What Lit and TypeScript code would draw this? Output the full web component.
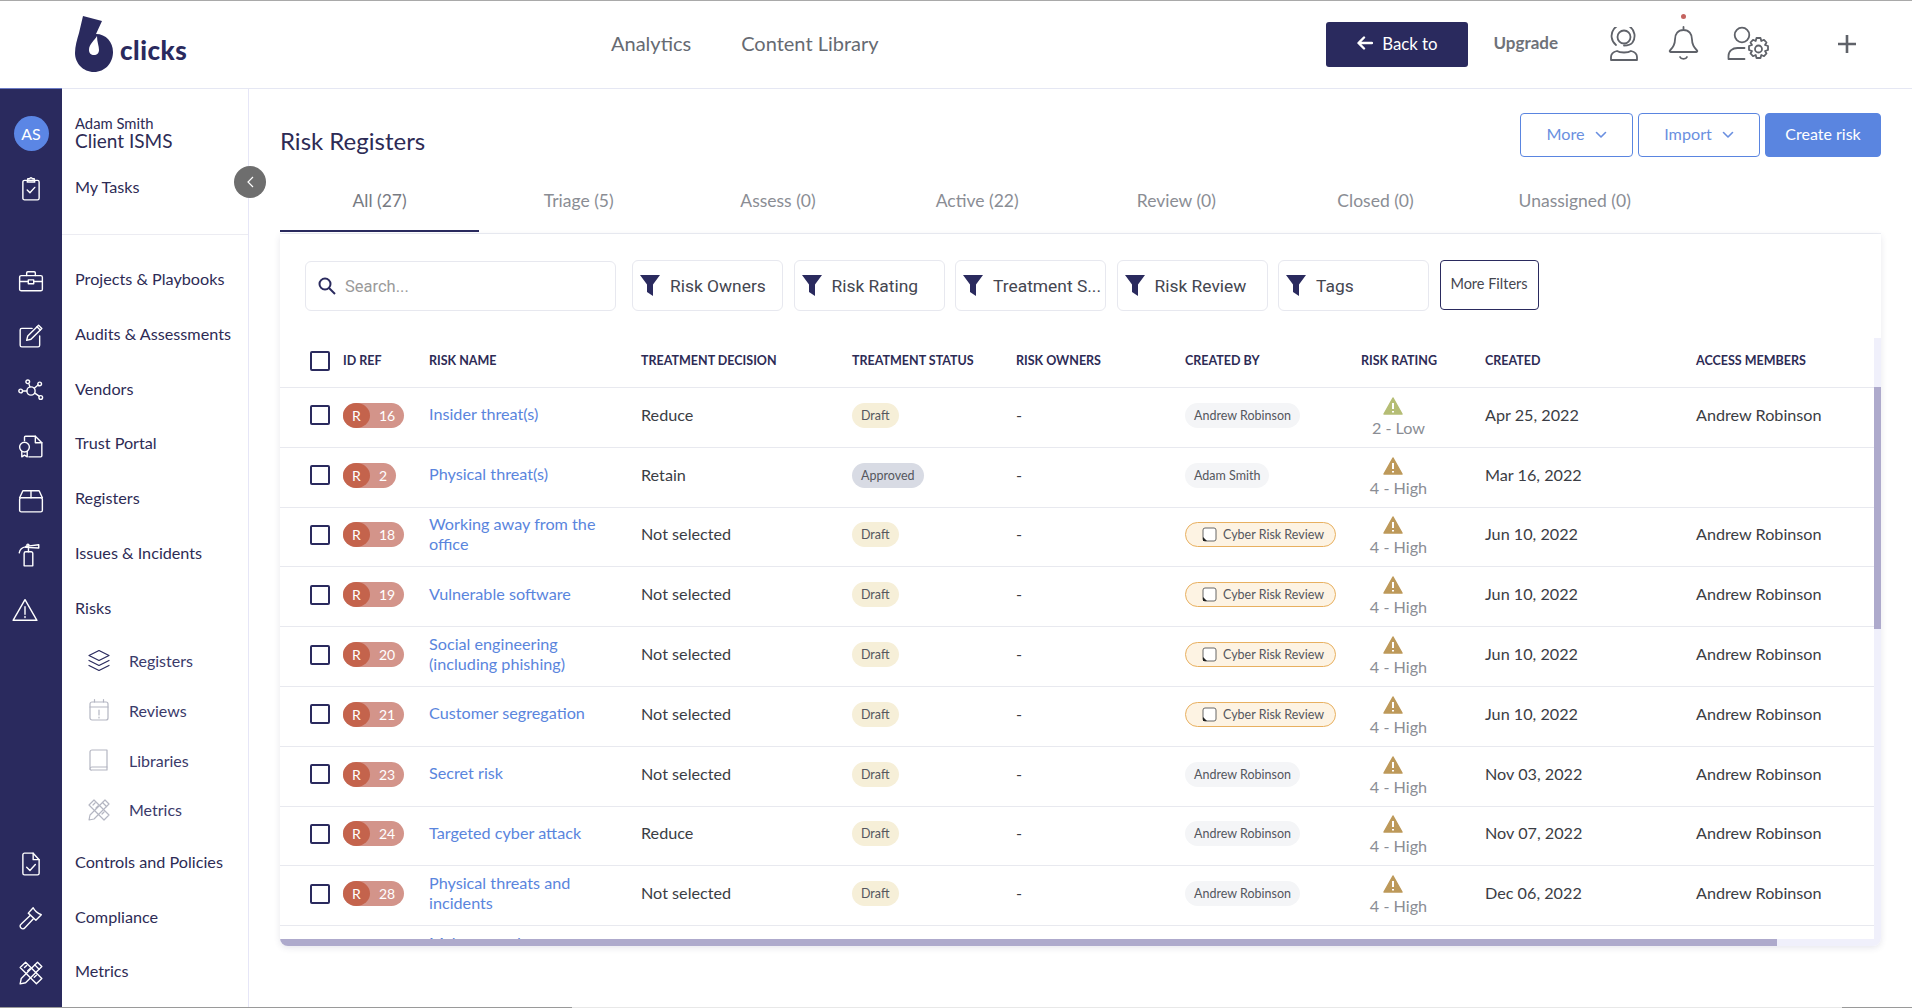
import { LitElement, css, html, svg } from 'lit';
import { customElement } from 'lit/decorators.js';

const icons: Record<string, unknown> = {
  clipboard: svg`<rect x="4.500" y="4" width="15" height="18" rx="1.500"/><path d="M9 4V2.500h2a1 1 0 0 1 2 0h2V4l.5 1.500h-7z"/><path d="M8.500 13l2.500 2.500 4.500-5"/>`,
  briefcase: svg`<rect x="1.500" y="7" width="21" height="14" rx="1.500"/><path d="M8 7V4.500A1 1 0 0 1 9 3.500h6a1 1 0 0 1 1 1V7"/><path d="M1.500 12.500h8M14.500 12.500h8"/><rect x="9.500" y="11" width="5" height="3.500"/>`,
  edit: svg`<path d="M13 5H3.500A1.500 1.500 0 0 0 2 6.500v14A1.500 1.500 0 0 0 3.500 22h15a1.500 1.500 0 0 0 1.500-1.500V12"/><path d="M9 12L19 2l3 3-10 10-4 1z"/><path d="M17.500 3.500l3 3"/>`,
  nodes: svg`<circle cx="12" cy="12" r="3.800"/><circle cx="9" cy="3.500" r="1.700"/><circle cx="20" cy="5.500" r="1.700"/><circle cx="21" cy="18" r="1.700"/><circle cx="2.500" cy="12" r="1.700"/><path d="M10 5.200l1 3M18.500 6.500l-3.500 3M15.500 14l4 2.800M4.200 12h4"/>`,
  cert: svg`<path d="M6 7V4a1 1 0 0 1 1-1h9l6 6v12a1 1 0 0 1-1 1H10"/><path d="M16 3v6h6"/><circle cx="6" cy="13" r="4.500"/><path d="M3.500 17v5l2.500-1.500L8.500 22v-5"/>`,
  box: svg`<rect x="1.500" y="9" width="21" height="13" rx="1.500"/><path d="M1.500 9l3-6.500h15l3 6.500M12 2.500V9"/>`,
  extinguisher: svg`<path d="M9 9h5a1.500 1.500 0 0 1 1.500 1.500V22h-8V10.500A1.500 1.500 0 0 1 9 9z"/><path d="M11.500 9V4.500M9 4l12-1.500v3L9 5zM9 4.500C5 5 3.500 7 3 10"/><circle cx="11" cy="3" r="1"/>`,
  warning: svg`<path d="M12 2.500L23 21.500H1z"/><path d="M12 9v7M12 18v1"/>`,
  doccheck: svg`<path d="M14 2H6a1.500 1.500 0 0 0-1.500 1.500v17A1.500 1.500 0 0 0 6 22h12a1.500 1.500 0 0 0 1.500-1.500V8z"/><path d="M14 2v6h5.500"/><path d="M8 15l3 3 5-5.500"/>`,
  gavel: svg`<path d="M9.500 7.500L14 2.500c1 2 3 4.500 7.500 6.500L16.500 14z"/><path d="M11 10L3 17.500c-1.500 1.200-1.300 2.800-.2 3.800s2.600 1 3.600-.3L14 13"/>`,
  metrics: svg`<path d="M7 2L2 7l15 15 5-5zM6 7l2-2M9 10l2-2M15 16l2-2"/><path d="M18 2l4 4L7 21l-5 1 1-5z"/><path d="M15.500 4.500l4 4"/>`,
  layers: svg`<path d="M12 2l10 5-10 5L2 7z"/><path d="M2 12l10 5 10-5M2 17l10 5 10-5"/>`,
  calendar: svg`<rect x="3" y="4" width="18" height="18" rx="2"/><path d="M3 9h18M7.500 1.500V4M16.500 1.500V4M12 12v5M12 19v1"/>`,
  book: svg`<path d="M5 2h15v17H5a2 2 0 0 0-2 2V4a2 2 0 0 1 2-2z"/><path d="M3 21a1.500 1.500 0 0 0 2 1h15v-3"/>`,
};

const icon = (name: string, size = 26, width = 1.300) => html`<svg
  class="icon"
  width=${size}
  height=${size}
  viewBox="0 0 24 24"
  fill="none"
  stroke="currentColor"
  stroke-width=${width}
  stroke-linecap="round"
  stroke-linejoin="round"
>${icons[name]}</svg>`;

const funnel = html`<svg class="funnel" width="20" height="21" viewBox="0 0 20 21"><path d="M0 0h20l-7 9.500V21l-6-4V9.500z" fill="#2a2a5e"/></svg>`;

const chevron = html`<svg class="chev" width="12" height="8" viewBox="0 0 12 8" fill="none" stroke="currentColor" stroke-width="1.600" stroke-linecap="round" stroke-linejoin="round"><path d="M1.500 1.500L6 6l4.500-4.500"/></svg>`;

const warnIcon = (color: string) => html`<svg width="20" height="18" viewBox="0 0 20 18">
  <path d="M10 1L19 17H1z" fill=${color} stroke=${color} stroke-width="1.500" stroke-linejoin="round"/>
  <path d="M10 6v6M10 14v1.500" stroke="#fff" stroke-width="2"/>
</svg>`;

const railItems = [
  { name: 'briefcase', cls: 'g0' },
  { name: 'edit', cls: '' },
  { name: 'nodes', cls: '' },
  { name: 'cert', cls: '' },
  { name: 'box', cls: '' },
  { name: 'extinguisher', cls: 'ext' },
  { name: 'warning', cls: 'warn' },
];

const navTop = ['Projects & Playbooks', 'Audits & Assessments', 'Vendors', 'Trust Portal', 'Registers', 'Issues & Incidents', 'Risks'];
const navSub = [
  { label: 'Registers', icon: 'layers', cls: 'dark' },
  { label: 'Reviews', icon: 'calendar', cls: '' },
  { label: 'Libraries', icon: 'book', cls: '' },
  { label: 'Metrics', icon: 'metrics', cls: '' },
];
const navBottom = ['Controls and Policies', 'Compliance', 'Metrics'];

const tabs = ['All (27)', 'Triage (5)', 'Assess (0)', 'Active (22)', 'Review (0)', 'Closed (0)', 'Unassigned (0)'];
const filters = ['Risk Owners', 'Risk Rating', 'Treatment S...', 'Risk Review', 'Tags'];
const heads = ['ID REF', 'RISK NAME', 'TREATMENT DECISION', 'TREATMENT STATUS', 'RISK OWNERS', 'CREATED BY', 'RISK RATING', 'CREATED', 'ACCESS MEMBERS'];

const AR = 'Andrew Robinson';
const CY = 'Cyber Risk Review';
const rows = [
  { id: 16, name: 'Insider threat(s)', dec: 'Reduce', status: 'Draft', by: AR, rating: '2 - Low', date: 'Apr 25, 2022', access: AR },
  { id: 2, name: 'Physical threat(s)', dec: 'Retain', status: 'Approved', by: 'Adam Smith', rating: '4 - High', date: 'Mar 16, 2022', access: '' },
  { id: 18, name: 'Working away from the office', dec: 'Not selected', status: 'Draft', by: CY, rating: '4 - High', date: 'Jun 10, 2022', access: AR },
  { id: 19, name: 'Vulnerable software', dec: 'Not selected', status: 'Draft', by: CY, rating: '4 - High', date: 'Jun 10, 2022', access: AR },
  { id: 20, name: 'Social engineering (including phishing)', dec: 'Not selected', status: 'Draft', by: CY, rating: '4 - High', date: 'Jun 10, 2022', access: AR },
  { id: 21, name: 'Customer segregation', dec: 'Not selected', status: 'Draft', by: CY, rating: '4 - High', date: 'Jun 10, 2022', access: AR },
  { id: 23, name: 'Secret risk', dec: 'Not selected', status: 'Draft', by: AR, rating: '4 - High', date: 'Nov 03, 2022', access: AR },
  { id: 24, name: 'Targeted cyber attack', dec: 'Reduce', status: 'Draft', by: AR, rating: '4 - High', date: 'Nov 07, 2022', access: AR },
  { id: 28, name: 'Physical threats and incidents', dec: 'Not selected', status: 'Draft', by: AR, rating: '4 - High', date: 'Dec 06, 2022', access: AR },
];

@customElement('app-root')
export class AppRoot extends LitElement {
  static styles = css`
    :host {
      display: flex;
      flex-direction: column;
      width: 1912px;
      height: 1008px;
      overflow: hidden;
      background: #fff;
      font-family: Lato, 'Liberation Sans', sans-serif;
      font-size: 16.200px;
      color: #2a2a5e;
    }

    .topline {
      flex: none;
      height: 1px;
      background: #a9a9a9;
    }

    /* header */
    header {
      flex: none;
      box-sizing: border-box;
      height: 88px;
      display: flex;
      align-items: center;
      padding: 0 0 1px 75px;
      border-bottom: 1px solid #e5e7f3;
    }

    .logo {
      display: flex;
      align-items: flex-end;
      width: 113px;
      height: 56px;
    }

    .logo-text {
      margin: 0 0 6px 7px;
      font-size: 26px;
      line-height: 32px;
      font-weight: 900;
      letter-spacing: 0.500px;
      color: #2a2a5e;
    }

    .top-nav {
      display: flex;
      gap: 50px;
      margin-left: 423px;
      padding-bottom: 3px;
      font-size: 20px;
      color: #666a72;
    }

    .top-right {
      display: flex;
      align-items: center;
      margin-left: auto;
      height: 100%;
    }

    .back {
      box-sizing: border-box;
      display: flex;
      align-items: center;
      justify-content: center;
      gap: 9px;
      width: 142px;
      height: 45px;
      padding-bottom: 2px;
      border-radius: 3px;
      background: #2a2a5e;
      color: #fff;
      font-size: 16.800px;
    }

    .upgrade {
      margin-left: 25px;
      padding-bottom: 3px;
      font-size: 17px;
      font-weight: 700;
      color: #6f7279;
    }

    .head-icon {
      position: relative;
      display: flex;
      color: #5f6269;
    }

    .headset {
      margin-left: 50px;
    }

    .bell {
      margin-left: 27px;
    }

    .dot {
      position: absolute;
      left: 14px;
      top: -12px;
      width: 5px;
      height: 5px;
      border-radius: 50%;
      background: #c4635f;
    }

    .usergear {
      margin-left: 27px;
    }

    .plus {
      margin-left: 68px;
      margin-right: 55px;
    }

    /* body */
    .body {
      flex: 1;
      min-height: 0;
      display: flex;
    }

    .rail {
      flex: none;
      width: 62px;
      display: flex;
      flex-direction: column;
      align-items: center;
      margin-top: -1px;
      border-top: 1px solid #6a7ac4;
      background: #2a2a5e;
      color: #fff;
    }

    .avatar {
      display: flex;
      align-items: center;
      justify-content: center;
      width: 35px;
      height: 35px;
      margin-top: 27px;
      padding-bottom: 1px;
      box-sizing: border-box;
      border-radius: 50%;
      background: #5b86e5;
      color: #fff;
      font-size: 16px;
    }

    .rail-btn {
      box-sizing: border-box;
      display: flex;
      align-items: center;
      justify-content: center;
      width: 100%;
      height: 54.800px;
    }

    .rail-btn.first {
      margin-top: 18px;
      height: 40px;
    }

    .rail-btn.g0 {
      margin-top: 45px;
    }

    .rail-btn.ext {
      padding-right: 4px;
    }

    .rail-btn.warn {
      padding-right: 12px;
    }

    .rail-bottom {
      margin-top: 199px;
      width: 100%;
    }

    .rail-bottom .rail-btn {
      height: 54.400px;
    }

    .side {
      flex: none;
      position: relative;
      box-sizing: border-box;
      width: 187px;
      border-right: 1px solid #e6e6f7;
      color: #2d2b55;
    }

    .who {
      box-sizing: border-box;
      height: 146px;
      padding: 26px 0 0 13px;
      border-bottom: 1px solid #ececf2;
    }

    .who-name {
      font-size: 14.800px;
      line-height: 17px;
    }

    .who-org {
      font-size: 19px;
      line-height: 17px;
    }

    .tasks {
      margin-top: 28px;
      line-height: 20px;
    }

    .collapse {
      position: absolute;
      right: -18px;
      top: 77px;
      display: flex;
      align-items: center;
      justify-content: center;
      width: 32px;
      height: 32px;
      border-radius: 50%;
      background: #6e6e6e;
    }

    .side-list {
      padding: 17px 0 0 13px;
    }

    .side-item {
      height: 54.800px;
      line-height: 54.800px;
    }

    .sub-item {
      display: flex;
      align-items: center;
      height: 49.800px;
      font-size: 16px;
      color: #3a3a6a;
    }

    .sub-icon {
      display: flex;
      justify-content: center;
      width: 24px;
      margin: 0 18px 0 12px;
      color: #b4b6c2;
    }

    .sub-item.dark .sub-icon {
      color: #2a2a5e;
    }

    /* main */
    .main {
      flex: 1;
      min-width: 0;
      display: flex;
      flex-direction: column;
      padding: 24px 31px 0;
    }

    .title-row {
      display: flex;
      gap: 5px;
      height: 44px;
    }

    h1 {
      margin: 13px auto 0 0;
      font-size: 24px;
      line-height: 30px;
      font-weight: 400;
      color: #2d2b55;
    }

    .btn {
      box-sizing: border-box;
      display: flex;
      align-items: center;
      justify-content: center;
      gap: 10px;
      height: 44px;
      padding-bottom: 3px;
      border: 1px solid #5a85e0;
      border-radius: 4px;
      color: #6a8fe0;
    }

    .chev {
      margin-top: 3px;
    }

    .btn.more {
      width: 113px;
    }

    .btn.import {
      width: 122px;
    }

    .btn.create {
      width: 116px;
      background: #5a85e0;
      color: #fff;
      font-size: 16px;
    }

    .tabs {
      display: flex;
      flex: none;
      height: 61px;
      margin-top: 15px;
      border-bottom: 1px solid #eceef4;
    }

    .tab {
      box-sizing: border-box;
      width: 199.200px;
      height: 60px;
      padding-top: 18px;
      text-align: center;
      font-size: 17.500px;
      line-height: 22px;
      color: #8a8d94;
    }

    .tab.active {
      color: #777a82;
      border-bottom: 2px solid #2a2a5e;
    }

    .card {
      flex: none;
      display: flex;
      flex-direction: column;
      box-sizing: border-box;
      height: 712px;
      border-radius: 0 0 8px 8px;
      overflow: hidden;
      background: #fff;
      box-shadow: 0 2px 6px rgba(60, 60, 100, 0.12);
    }

    .filters {
      flex: none;
      display: flex;
      gap: 10.500px;
      height: 51px;
      padding: 26px 0 25px 25px;
    }

    .search {
      box-sizing: border-box;
      display: flex;
      align-items: center;
      gap: 9px;
      width: 311px;
      height: 50px;
      margin: 1px 5.500px 0 0;
      padding-left: 12px;
      border: 1px solid #e7e8ef;
      border-radius: 6px;
      font-family: Roboto, sans-serif;
      font-size: 16.500px;
      color: #9a9a9a;
    }

    .search svg {
      color: #2a2a5e;
    }

    .filter {
      box-sizing: border-box;
      display: flex;
      align-items: center;
      gap: 10px;
      width: 151px;
      height: 51px;
      padding-left: 7px;
      border: 1px solid #e7e8ef;
      border-radius: 6px;
      font-family: Roboto, sans-serif;
      font-size: 17.400px;
      color: #444650;
      white-space: nowrap;
    }

    .funnel {
      flex: none;
    }

    .more-filters {
      box-sizing: border-box;
      display: flex;
      align-items: center;
      justify-content: center;
      width: 99px;
      height: 50px;
      padding-bottom: 3px;
      border: 1px solid #2a2a5e;
      border-radius: 4px;
      font-size: 14.500px;
      color: #444650;
    }

    .table-wrap {
      flex: 1;
      min-height: 0;
      display: flex;
    }

    .table {
      flex: 1;
      min-width: 0;
      overflow: hidden;
    }

    .row {
      display: grid;
      grid-template-columns: 33px 86px 212px 211px 164px 169px 176px 124px 211px 1fr;
      align-items: center;
      box-sizing: border-box;
      height: 59.800px;
      padding: 0 0 4px 30px;
      border-bottom: 1px solid #e8e9ef;
      color: #3b3d44;
    }

    .row.head {
      height: 52px;
      padding: 0 0 2px 30px;
      font-size: 12.500px;
      font-weight: 700;
      color: #2d2b55;
    }

    .row.partial {
      border-bottom: none;
    }

    .txt {
      padding-bottom: 2px;
    }

    .check {
      box-sizing: border-box;
      width: 20px;
      height: 20px;
      border: 2px solid #2a2a5e;
      border-radius: 2px;
    }

    .idpill {
      justify-self: start;
      display: inline-flex;
      align-items: center;
      height: 25px;
      border-radius: 13px;
      background: #d3948a;
      color: #fff;
      font-size: 14px;
    }

    .idpill b {
      display: flex;
      align-items: center;
      justify-content: center;
      width: 27px;
      height: 25px;
      border-radius: 50%;
      background: #c4634c;
      font-weight: 400;
    }

    .idpill span {
      padding: 0 9px;
    }

    .name {
      width: 190px;
      color: #5a85dd;
      line-height: 20px;
    }

    .name.narrow {
      width: 100px;
    }

    .pill {
      justify-self: start;
      display: inline-flex;
      align-items: center;
      height: 25px;
      padding: 0 9px;
      border-radius: 13px;
      font-size: 12.500px;
      color: #55575e;
    }

    .pill.draft {
      background: #f6efd8;
    }

    .pill.approved {
      background: #d8dbe4;
    }

    .pill.by {
      background: #f4f5f7;
    }

    .pill.cyber {
      box-sizing: border-box;
      width: 151px;
      padding-left: 16px;
      gap: 6px;
      background: #fdf3e3;
      border: 1px solid #e8b060;
    }

    .rating {
      display: flex;
      flex-direction: column;
      align-items: center;
      width: 75px;
      padding-top: 4px;
      color: #8a8d94;
      line-height: 20px;
    }

    .rating svg {
      margin: 0 12px 3px 0;
    }

    .vtrack {
      flex: none;
      width: 7px;
      margin-top: 2px;
      padding-top: 49px;
      background: #f0f0fb;
    }

    .vthumb {
      height: 242px;
      background: #aeaacc;
    }

    .htrack {
      flex: none;
      height: 7px;
      background: #f0f0fb;
    }

    .hthumb {
      height: 7px;
      background: #aeaacc;
    }

    .bottomline {
      flex: none;
      display: flex;
      height: 1px;
      background: #e8e8e8;
    }

    .bottomline i {
      background: #9a9a9a;
    }

    .bl-left {
      width: 572px;
    }

    .bl-right {
      width: 70px;
      margin-left: auto;
    }
  `;

  renderRow(r: (typeof rows)[number]) {
    return html`<div class="row">
      <div class="check"></div>
      <div class="idpill"><b>R</b><span>${r.id}</span></div>
      <div class="name txt">${r.name}</div>
      <div class="txt">${r.dec}</div>
      <div class="pill ${r.status === 'Draft' ? 'draft' : 'approved'}">${r.status}</div>
      <div class="txt">-</div>
      ${r.by === CY
        ? html`<div class="pill cyber">
            <svg width="15" height="15" viewBox="0 0 15 15"><rect x="1" y="1" width="13" height="13" rx="2" fill="#fff" stroke="#666" stroke-width="1"/><path d="M1 10l4 4H1z" fill="#222"/></svg>
            ${r.by}
          </div>`
        : html`<div class="pill by">${r.by}</div>`}
      <div class="rating">
        ${warnIcon(r.rating.startsWith('2') ? '#b5bd75' : '#bd995a')}
        ${r.rating}
      </div>
      <div class="txt">${r.date}</div>
      <div class="txt">${r.access}</div>
    </div>`;
  }

  render() {
    return html`
      <div class="topline"></div>
      <header>
        <div class="logo">
          <svg width="38" height="56" viewBox="0 0 38 56">
            <path d="M8 0L27 5L21 18C31 18 38 26 38 36C38 47 30 56 19 56C8 56 0 47 0 37C0 30 2 24 4 17Z" fill="#2a2a5e"/>
            <path d="M22 20C20 24 14 28 14 34C14 37 16 39 19 39C22 39 24 37 24 34C24 30 22 26 22 20Z" fill="#fff"/>
          </svg>
          <span class="logo-text">clicks</span>
        </div>
        <nav class="top-nav"><span>Analytics</span><span>Content Library</span></nav>
        <div class="top-right">
          <div class="back">
            <svg width="16" height="14" viewBox="0 0 16 14" fill="none" stroke="#fff" stroke-width="2.400" stroke-linecap="round" stroke-linejoin="round"><path d="M15 7H2M7 1.500L1.500 7 7 12.500"/></svg>
            Back to
          </div>
          <span class="upgrade">Upgrade</span>
          <div class="head-icon headset">
            <svg width="32" height="34" viewBox="0 0 32 34" fill="none" stroke="currentColor" stroke-width="1.800" stroke-linecap="round" stroke-linejoin="round"><circle cx="16" cy="10" r="6.500"/><path d="M8 18a11.500 11.500 0 1 1 16.500-2.500c-1.500 2-4.500 3-8.500 3"/><path d="M3 33v-3c0-3 2-5 6-6 3 2 11 2 14 0 4 1 6 3 6 6v3z"/></svg>
          </div>
          <div class="head-icon bell">
            <span class="dot"></span>
            <svg width="33" height="36" viewBox="0 0 33 36" fill="none" stroke="currentColor" stroke-width="1.800" stroke-linecap="round" stroke-linejoin="round"><path d="M16.500 1v3M16.500 4c-5.500 0-8.500 4-8.500 9.500 0 5-2 8-5 11-.7.7-.2 1.500.5 1.500h26c.7 0 1.200-.8.500-1.500-3-3-5-6-5-11 0-5.500-3-9.500-8.500-9.500zM13 31c1 2.500 6 2.500 7 0"/></svg>
          </div>
          <div class="head-icon usergear">
            <svg width="42" height="36" viewBox="0 0 42 36" fill="none" stroke="currentColor" stroke-width="1.800" stroke-linecap="round" stroke-linejoin="round"><circle cx="15" cy="9" r="7.300"/><path d="M1.500 33v-3c0-5 4-8 9-8h7M1.500 33h16"/><g transform="translate(.5 -2)"><circle cx="31" cy="25" r="3.500"/><path d="M29 14h4l.8 3 2.700-1.200 2.500 2.700-1.500 2.500 3 1v4l-3 1 1.500 2.500-2.500 2.700-2.700-1.200-.8 3h-4l-.8-3-2.700 1.200-2.500-2.700 1.500-2.500-3-1v-4l3-1-1.500-2.500 2.500-2.700 2.700 1.200z"/></g></svg>
          </div>
          <div class="head-icon plus">
            <svg width="20" height="20" viewBox="0 0 20 20" stroke="currentColor" stroke-width="2.600"><path d="M10 1v18M1 10h18"/></svg>
          </div>
        </div>
      </header>
      <div class="body">
        <div class="rail">
          <div class="avatar">AS</div>
          <div class="rail-btn first">${icon('clipboard')}</div>
          ${railItems.map((i) => html`<div class="rail-btn ${i.cls}">${icon(i.name)}</div>`)}
          <div class="rail-bottom">
            ${['doccheck', 'gavel', 'metrics'].map((n) => html`<div class="rail-btn">${icon(n)}</div>`)}
          </div>
        </div>
        <aside class="side">
          <div class="who">
            <div class="who-name">Adam Smith</div>
            <div class="who-org">Client ISMS</div>
            <div class="tasks">My Tasks</div>
          </div>
          <div class="collapse">
            <svg width="8" height="14" viewBox="0 0 8 14" fill="none" stroke="#fff" stroke-width="1.200"><path d="M7 2L2 7l5 5"/></svg>
          </div>
          <div class="side-list">
            ${navTop.map((t) => html`<div class="side-item">${t}</div>`)}
            ${navSub.map(
              (s) => html`<div class="sub-item ${s.cls}"><span class="sub-icon">${icon(s.icon, s.cls ? 27 : 26, 1.200)}</span>${s.label}</div>`,
            )}
            ${navBottom.map((t) => html`<div class="side-item">${t}</div>`)}
          </div>
        </aside>
        <main class="main">
          <div class="title-row">
            <h1>Risk Registers</h1>
            <div class="btn more">More ${chevron}</div>
            <div class="btn import">Import ${chevron}</div>
            <div class="btn create">Create risk</div>
          </div>
          <div class="tabs">
            ${tabs.map((t, i) => html`<div class="tab ${i === 0 ? 'active' : ''}">${t}</div>`)}
          </div>
          <section class="card">
            <div class="filters">
              <div class="search">
                <svg width="18" height="18" viewBox="0 0 18 18" fill="none" stroke="currentColor" stroke-width="2"><circle cx="7" cy="7" r="5.500"/><path d="M11 11l6 6"/></svg>
                Search...
              </div>
              ${filters.map((f) => html`<div class="filter">${funnel}${f}</div>`)}
              <div class="more-filters">More Filters</div>
            </div>
            <div class="table-wrap">
              <div class="table">
                <div class="row head">
                  <div class="check"></div>
                  ${heads.map((h) => html`<div>${h}</div>`)}
                </div>
                ${rows.map((r) => this.renderRow(r))}
                <div class="row partial">
                  <div></div>
                  <div></div>
                  <div class="name narrow txt">Malware and ransomware</div>
                  <div></div>
                  <div></div>
                  <div></div>
                  <div></div>
                  <div class="rating">${warnIcon('#bd995a')}</div>
                </div>
              </div>
              <div class="vtrack"><div class="vthumb"></div></div>
            </div>
            <div class="htrack"><div class="hthumb" style="width: 1497px"></div></div>
          </section>
        </main>
      </div>
      <div class="bottomline"><i class="bl-left"></i><i class="bl-right"></i></div>
    `;
  }
}
